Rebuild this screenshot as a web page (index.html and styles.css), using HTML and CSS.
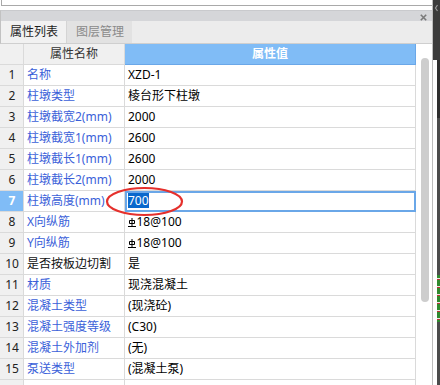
FILE: index.html
```html
<!DOCTYPE html>
<html lang="zh-CN">
<head>
  <meta charset="UTF-8">
  <title>属性列表</title>
  <link rel="stylesheet" href="styles.css">
</head>
<body>
  <div class="main">
    <div class="topbox"></div>
    <div class="titlebar">
      <svg class="close" width="7" height="7" viewBox="0 0 7 7"><path d="M0.8 0.8L6.2 6.2M6.2 0.8L0.8 6.2" stroke="#7a7a7a" stroke-width="1.6"/></svg>
    </div>
    <div class="tabbar">
      <div class="tab active">属性列表</div>
      <div class="tab">图层管理</div>
    </div>
    <div class="body-area">
      <div class="grid">
        <div class="row head">
          <div class="num"></div>
          <div class="name">属性名称</div>
          <div class="val">属性值</div>
        </div>
        <div class="row"><div class="num">1</div><div class="name">名称</div><div class="val">XZD-1</div></div>
        <div class="row"><div class="num">2</div><div class="name">柱墩类型</div><div class="val">棱台形下柱墩</div></div>
        <div class="row"><div class="num">3</div><div class="name">柱墩截宽2(mm)</div><div class="val">2000</div></div>
        <div class="row"><div class="num">4</div><div class="name">柱墩截宽1(mm)</div><div class="val">2600</div></div>
        <div class="row"><div class="num">5</div><div class="name">柱墩截长1(mm)</div><div class="val">2600</div></div>
        <div class="row"><div class="num">6</div><div class="name">柱墩截长2(mm)</div><div class="val">2000</div></div>
        <div class="row current"><div class="num">7</div><div class="name">柱墩高度(mm)</div><div class="val"><span class="sel">700</span></div></div>
        <div class="row"><div class="num">8</div><div class="name">X向纵筋</div><div class="val"><svg class="bar" width="8" height="9" viewBox="0 0 8 9"><path d="M4 0V8M1.5 2.5H6.5V5.5H1.5ZM0 8.5H8" stroke="#000" fill="none" stroke-width="1"/></svg>18@100</div></div>
        <div class="row"><div class="num">9</div><div class="name">Y向纵筋</div><div class="val"><svg class="bar" width="8" height="9" viewBox="0 0 8 9"><path d="M4 0V8M1.5 2.5H6.5V5.5H1.5ZM0 8.5H8" stroke="#000" fill="none" stroke-width="1"/></svg>18@100</div></div>
        <div class="row"><div class="num">10</div><div class="name plain">是否按板边切割</div><div class="val">是</div></div>
        <div class="row"><div class="num">11</div><div class="name">材质</div><div class="val">现浇混凝土</div></div>
        <div class="row"><div class="num">12</div><div class="name">混凝土类型</div><div class="val">(现浇砼)</div></div>
        <div class="row"><div class="num">13</div><div class="name">混凝土强度等级</div><div class="val">(C30)</div></div>
        <div class="row"><div class="num">14</div><div class="name">混凝土外加剂</div><div class="val">(无)</div></div>
        <div class="row"><div class="num">15</div><div class="name">泵送类型</div><div class="val">(混凝土泵)</div></div>
        <div class="row"><div class="num"></div><div class="name"></div><div class="val"></div></div>
      </div>
      <div class="scroll">
        <div class="thumb"></div>
      </div>
    </div>
    <!-- red mark drawn over the edited cell -->
    <svg class="mark" width="84" height="34" viewBox="0 0 84 34"><ellipse cx="41.5" cy="16.5" rx="37.5" ry="13.5" fill="none" stroke="#e5302c" stroke-width="2.2"/></svg>
  </div>
  <div class="edge">
    <div class="edge-top">
      <svg width="7" height="10" viewBox="0 0 7 10"><path d="M4.5 2L2.5 5L4.5 8" stroke="#9a9a9a" fill="none" stroke-width="1.2"/></svg>
    </div>
    <div class="edge-rest">
      <div class="edge-gap"></div>
      <div class="edge-bar"><div class="noise"></div></div>
    </div>
  </div>
</body>
</html>
```

FILE: styles.css
```css
html, body {
  margin: 0;
  height: 385px;
  overflow: hidden;
  background: #fff;
}
body {
  display: flex;
  width: 440px;
  font-family: "Noto Sans", "Noto Sans CJK SC", sans-serif;
  font-size: 12px;
  color: #000;
}
.main {
  width: 432px;
  position: relative;
  display: flex;
  flex-direction: column;
}
.topbox {
  height: 6px;
  margin-left: 1px;
  margin-bottom: 4px;
  border-left: 1px solid #a9a9a9;
  border-bottom: 1px solid #a9a9a9;
  box-sizing: border-box;
}
.titlebar {
  height: 11px;
  background: #d5d6d9;
  border-top: 1px solid #c9cacd;
  border-left: 1px solid #c2c2c2;
  box-sizing: border-box;
  display: flex;
  justify-content: flex-end;
  align-items: center;
  padding-right: 5px;
}
.close {
  margin-top: 3px;
}
.tabbar {
  height: 23px;
  background: #ececec;
  border-left: 1px solid #c2c2c2;
  border-bottom: 1px solid #cfcfcf;
  box-sizing: border-box;
  display: flex;
}
.tab {
  line-height: 22px;
  padding: 0 8px 0 9px;
  color: #8a8a8a;
  background: #e2e2e2;
  border-left: 1px solid #d4d4d4;
  font-size: 12px;
}
.tab.active {
  color: #1e1e1e;
  background: #f1f1f1;
  border-left: none;
}
.body-area {
  display: flex;
  flex: 1;
  min-height: 0;
}
.grid {
  width: 416px;
}
.row {
  display: flex;
  height: 21px;
  line-height: 20px;
  white-space: nowrap;
}
.row > div {
  box-sizing: border-box;
  border-bottom: 1px solid #dadada;
  border-right: 1px solid #dadada;
  overflow: hidden;
}
.num {
  width: 24px;
  background: #f0f0f0;
  text-align: center;
  color: #222;
  padding-left: 1px;
}
.name {
  width: 101px;
  padding-left: 3px;
  color: #3b5fd9;
}
.name.plain {
  color: #111;
}
.val {
  width: 291px;
  padding-left: 3px;
}
.bar {
  vertical-align: -1px;
  margin-right: 0.5px;
}
.head .name {
  background: #f0f0f0;
  color: #333;
  text-align: center;
  padding-left: 0;
}
.head .val {
  background: #80bcf6;
  border-color: #6aa7e8;
  color: #fff;
  font-weight: bold;
  text-align: center;
  padding-left: 0;
}
.current .num {
  background: #80bcf6;
  color: #fff;
  font-weight: bold;
}
.current .val {
  outline: 2px solid #6aa7e8;
  outline-offset: -2px;
}
.sel {
  background: #0a68cc;
  color: #fff;
  display: inline-block;
  line-height: 15px;
}
.scroll {
  width: 16px;
  background: #fff;
}
.thumb {
  width: 8px;
  height: 244px;
  margin: 14px 0 0 5px;
  border-radius: 4px;
  background: #cdcdcd;
}
.mark {
  position: absolute;
  left: 103px;
  top: 185px;
}
.edge {
  width: 8px;
  border-left: 1px solid #bdbdbd;
  box-sizing: border-box;
  display: flex;
  flex-direction: column;
}
.edge-top {
  height: 60px;
  background: #3b3b3b;
}
.edge-top svg {
  display: block;
  margin-top: 3px;
}
.edge-rest {
  flex: 1;
  display: flex;
}
.edge-gap {
  width: 4px;
  background: #fff;
}
.edge-bar {
  flex: 1;
  background: linear-gradient(#2e2e2e 0 58px, #4b4b4b 58px);
}
.noise {
  height: 47px;
  margin-top: 215px;
  background: repeating-linear-gradient(#2f8a2f 0 3px, #e8e8e8 3px 4px, #b33 4px 5px, #2f8a2f 5px 8px);
}
```
